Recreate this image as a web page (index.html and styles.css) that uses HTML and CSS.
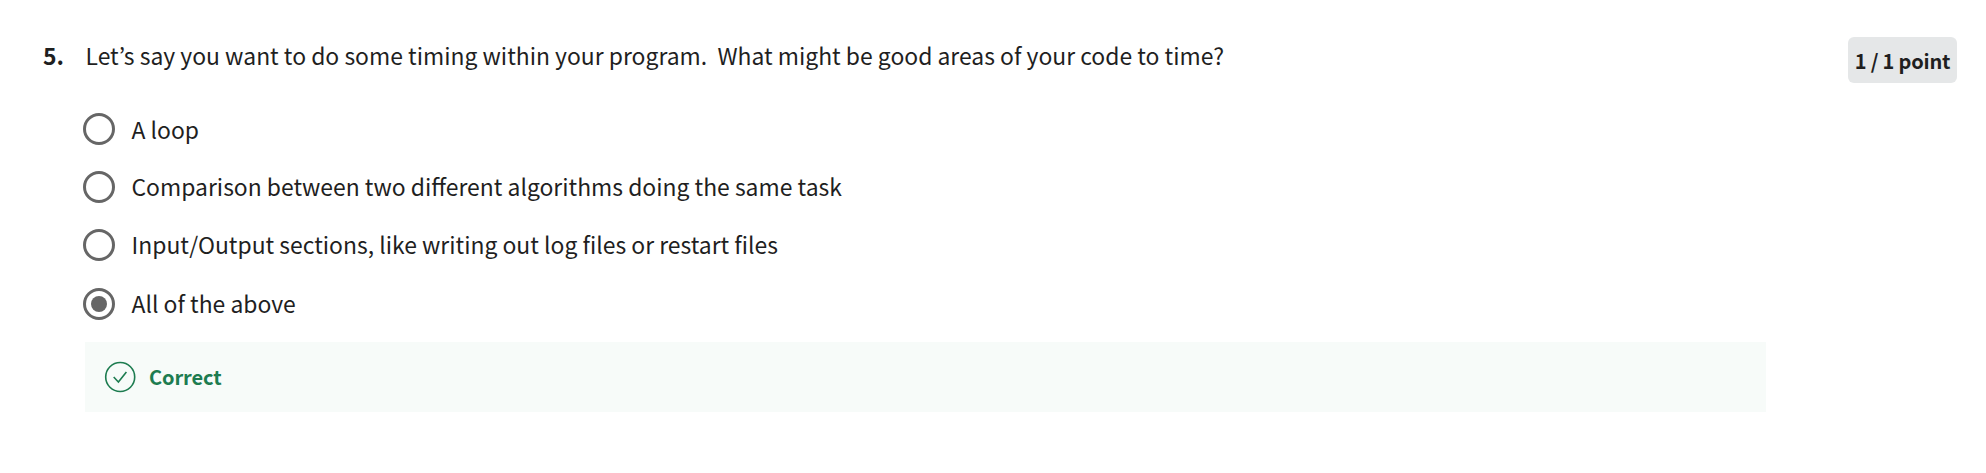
FILE: index.html
```
<!DOCTYPE html>
<html lang="en">
<head>
<meta charset="utf-8">
<title>Quiz question</title>
<link rel="stylesheet" href="styles.css">
</head>
<body>
<main class="question">
  <div class="number">5.</div>
  <section class="content">
    <p class="prompt">Let’s say you want to do some timing within your program.&nbsp; What might be good areas of your code to time?</p>
    <ul class="options">
      <li class="option"><span class="radio"></span><span class="label">A loop</span></li>
      <li class="option"><span class="radio"></span><span class="label">Comparison between two different algorithms doing the same task</span></li>
      <li class="option"><span class="radio"></span><span class="label">Input/Output sections, like writing out log files or restart files</span></li>
      <li class="option"><span class="radio checked"></span><span class="label">All of the above</span></li>
    </ul>
    <div class="feedback">
      <svg class="check" viewBox="0 0 32 32" fill="none" stroke="currentColor" stroke-width="1.6"><circle cx="16.2" cy="16" r="14.5"/><path d="M9.7 16l4.7 5 8-10"/></svg>
      <span class="verdict">Correct</span>
    </div>
  </section>
  <div class="points">1 / 1 point</div>
</main>
</body>
</html>
```
FILE: styles.css
```
* {
  box-sizing: border-box;
}

body {
  margin: 0;
  background: #fff;
  color: #1f1f1f;
  font: 22.92px/36px "Noto Sans CJK KR", "Noto Sans", sans-serif;
}

.question {
  display: grid;
  grid-template-columns: 42px 1681px 109px;
  align-items: start;
  padding: 37px 0 0 43px;
}

.number {
  font-weight: 700;
}

.prompt {
  margin: 0;
  padding-left: 0.5px;
  white-space: nowrap;
}

.options {
  display: grid;
  grid-template-rows: 58px 58px 58.5px 32px;
  margin: 40px 0 0 -2px;
  padding: 0;
  list-style: none;
}

.option {
  display: flex;
  align-items: flex-start;
  gap: 16.5px;
  height: 32px;
}

.label {
  margin-top: -2px;
  white-space: nowrap;
}

.option + .option .label {
  margin-top: -3px;
}

.radio {
  display: grid;
  place-items: center;
  width: 32px;
  height: 32px;
  border: 3px solid #666;
  border-radius: 50%;
}

.checked::after {
  content: "";
  width: 16px;
  height: 16px;
  border-radius: 50%;
  background: #666;
}

.feedback {
  display: flex;
  align-items: center;
  gap: 13px;
  height: 70px;
  margin-top: 22.5px;
  padding-left: 19px;
  background: #f7fbf9;
  color: #1d7c50;
}

.check {
  width: 32px;
  height: 32px;
}

.verdict {
  font-size: 20px;
  font-weight: 700;
  letter-spacing: -0.1px;
}

.points {
  justify-self: start;
  width: 109px;
  height: 46px;
  margin-left: 82px;
  border-radius: 6px;
  background: #e5e7e8;
  font-size: 20px;
  font-weight: 700;
  letter-spacing: -0.2px;
  line-height: 48px;
  text-align: center;
  white-space: nowrap;
}
```
